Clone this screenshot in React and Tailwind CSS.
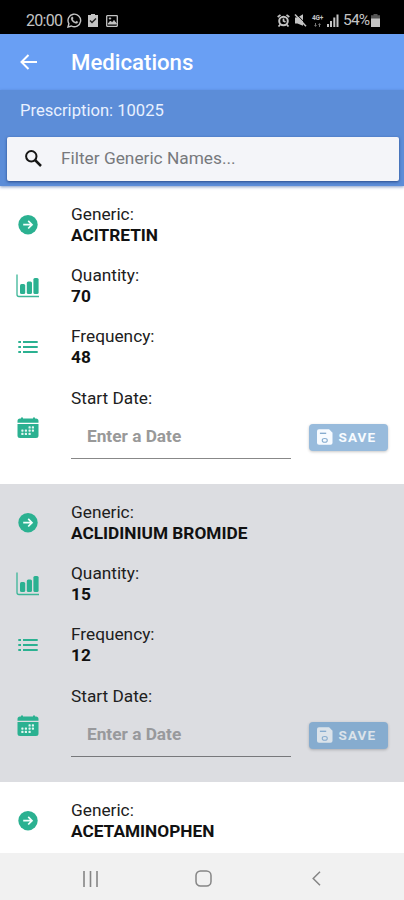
import React from "react";

const medications = [
  { name: "ACITRETIN", quantity: 70, frequency: 48 },
  { name: "ACLIDINIUM BROMIDE", quantity: 15, frequency: 12 },
];

function ArrowCircle() {
  return (
    <svg width="20" height="20" viewBox="0 0 20 20" fill="none">
      <circle cx="10" cy="9.7" r="9.7" fill="#2bb191" />
      <path d="M5.200 9.700h8.800M10.200 5.900 14 9.700l-3.800 3.800" stroke="#f4fffc" strokeWidth="1.700" />
    </svg>
  );
}

function BarChart() {
  return (
    <svg width="24" height="24" viewBox="0 0 24 24" fill="none">
      <path d="M1 .5V20.500a2 2 0 0 0 2 2H23" stroke="#3cb698" strokeWidth="1.300" />
      <rect x="4" y="10" width="5.200" height="10" rx="1.500" fill="#2bb191" />
      <rect x="10.800" y="7.500" width="5.200" height="12.500" rx="1.500" fill="#2bb191" />
      <rect x="17.400" y="4" width="5.200" height="16" rx="1.500" fill="#2bb191" />
    </svg>
  );
}

function ListIcon() {
  return (
    <svg width="20" height="14" viewBox="0 0 20 14" stroke="#2bb191" strokeWidth="1.900">
      <path d="M.3 2h2.700M5 2h14.700M.3 7h2.700M5 7h14.700M.3 12h2.700M5 12h14.700" />
    </svg>
  );
}

function CalendarIcon() {
  const dots = [
    [11.5, 9.3], [14.8, 9.3],
    [4.3, 12.5], [7.8, 12.5], [11.5, 12.5], [14.8, 12.5],
    [4.3, 15.8], [7.8, 15.8], [11.5, 15.8],
  ];
  return (
    <svg width="22" height="22" viewBox="0 0 22 22" fill="#2bb191">
      <path d="M.5 5.700V4a2.500 2.500 0 0 1 2.500-2.500h1V.5h2v1h10v-1h2v1h1A2.500 2.500 0 0 1 21.500 4v1.700z" />
      <path d="M.5 7h21V18.500a2.500 2.500 0 0 1-2.500 2.500H3a2.500 2.500 0 0 1-2.500-2.500z" />
      {dots.map(([x, y]) => (
        <rect key={`${x}-${y}`} x={x} y={y} width="2.200" height="2.200" rx=".6" fill="#e2f6f1" />
      ))}
    </svg>
  );
}

function Row({ icon, label, value }) {
  return (
    <div className="flex h-[61px] items-center">
      <div className="flex w-14 shrink-0 justify-center pb-[2px]">{icon}</div>
      <div className="ml-[15px] pb-[2px] text-[17.25px] leading-[20.5px] text-[#202020]">
        <div>{label}</div>
        <div className="font-bold text-[#111]">{value}</div>
      </div>
    </div>
  );
}

function Medication({ item, shaded }) {
  return (
    <section className={`h-[298px] shrink-0 py-[9px] ${shaded ? "bg-[#dcdde1]" : "bg-white"}`}>
      <Row icon={<ArrowCircle />} label="Generic:" value={item.name} />
      <Row icon={<BarChart />} label="Quantity:" value={item.quantity} />
      <Row icon={<ListIcon />} label="Frequency:" value={item.frequency} />
      <div className="flex h-[97px] items-center">
        <div className="flex w-14 shrink-0 justify-center pt-[2px]"><CalendarIcon /></div>
        <div className="ml-[15px] w-[220px] self-start pt-2.5">
          <div className="text-[17.25px] leading-[20.5px] text-[#202020]">Start Date:</div>
          <div className={`mt-[5.5px] flex h-[45px] items-center border-b pt-[2px] pl-4 text-[17.25px] font-bold ${shaded ? "border-[#77787b] text-[#98999c]" : "border-[#888] text-[#999]"}`}>
            Enter a Date
          </div>
        </div>
        <button className={`mt-[21px] ml-[18px] flex h-[27px] w-[79px] items-center rounded-[4px] pl-2 text-[13.5px] font-bold tracking-[1.1px] shadow-[0_1px_3px_rgba(0,0,0,0.22)] ${shaded ? "bg-[#86accf] text-[#dbe3ea]" : "bg-[#98bbdc] text-[#f7fbff]"}`}>
          <svg width="15.5" height="16" viewBox="0 0 16 16" fill="none">
            <path d="M2 0h10.500L16 3.500V14a2 2 0 0 1-2 2H2a2 2 0 0 1-2-2V2a2 2 0 0 1 2-2z" fill="currentColor" />
            <path d="M3 4.200h6.500" stroke="#86accf" strokeWidth="1.400" />
            <ellipse cx="8" cy="11.500" rx="2.600" ry="1.900" stroke="#86accf" strokeWidth="1.100" />
          </svg>
          <span className="ml-[6px]">SAVE</span>
        </button>
      </div>
    </section>
  );
}

function StatusBar() {
  return (
    <div className="flex h-[34px] shrink-0 items-center bg-black pt-[7px] pr-[24px] pl-[26px] text-[16px] text-[#c4c4c4]">
      <span className="w-[37px] pt-[1px] tracking-[-0.7px]">20:00</span>
      <svg className="ml-1" width="15" height="15" viewBox="0 0 15 15" fill="none" stroke="currentColor">
        <path d="m1 14 .9-3.400A6.300 6.300 0 1 1 4.400 13z" strokeWidth="1.400" />
        <path d="M4.500 4.200c.8-1 1.300-.4 1.800 1l-.6 1c.7 1.400 1.500 2.100 2.800 2.700l1-.8c1.400.5 1.900 1 1 2-2.500 1.800-8-3.200-6-5.900z" fill="currentColor" strokeWidth=".2" />
      </svg>
      <svg className="ml-[6px]" width="10" height="13" viewBox="0 0 10 13">
        <path d="M0 1h3V0h4v1h3v12H0z" fill="currentColor" />
        <path d="m2 6.500 2 2 4-4" stroke="#222" strokeWidth="1.400" fill="none" />
      </svg>
      <svg className="ml-2" width="12" height="12" viewBox="0 0 12 12" fill="none" stroke="currentColor">
        <rect x=".7" y=".7" width="10.600" height="10.600" rx=".5" strokeWidth="1.300" />
        <path d="m2 9 2.500-3 1.500 2 2-2.500L10.500 9z" fill="currentColor" />
        <circle cx="4" cy="3.500" r=".7" fill="currentColor" />
      </svg>
      <svg className="ml-auto" width="13" height="13" viewBox="0 0 13 13" fill="none" stroke="currentColor">
        <circle cx="6.500" cy="7" r="4.300" strokeWidth="2" />
        <path d="M.7 3 3.500.8M12.300 3 9.500.8M6.500 4.500V7l2 1M3.300 10.500 1.500 12.500M9.700 10.500l1.800 2" strokeWidth="1.700" />
      </svg>
      <svg className="ml-1" width="13" height="13" viewBox="0 0 13 13" fill="currentColor">
        <path d="M1 3.500h2.500L9 .3v11.400L3.500 9.500H1z" />
        <path d="m2.200 0 11 11" stroke="#000" strokeWidth="1" />
        <path d="m1 .5 11 11.800" stroke="currentColor" strokeWidth="1.500" />
      </svg>
      <span className="ml-[5px] flex w-[11px] flex-col items-center gap-[1px] text-[6.5px] leading-[8px] font-bold tracking-[-0.3px]">
        <span>4G+</span>
        <svg width="7" height="4" viewBox="0 0 7 4" fill="#777">
          <path d="M0 2h1V0h1v2h1L1.500 4zM4 2l1.500-2L7 2H6v2H5V2z" />
        </svg>
      </span>
      <svg className="ml-[3px]" width="13" height="13" viewBox="0 0 13 13" fill="currentColor">
        <path d="M1 10h2v3H1zM4 7h2v6H4zM7.300 3.500h2V13h-2zM10.500.5h2V13h-2z" />
      </svg>
      <span className="ml-[4px] w-[27px] pt-[1px] text-[15.5px] tracking-[-0.8px]">54%</span>
      <svg className="ml-px" width="9" height="13" viewBox="0 0 9 13">
        <path d="M2.500 0h4v1.200H9V5H0V1.200h2.500z" fill="#555" />
        <path d="M0 4.500h9V13H0z" fill="currentColor" />
      </svg>
    </div>
  );
}

export default function App() {
  return (
    <main className="flex h-[900px] w-[404px] flex-col overflow-hidden bg-white font-['Roboto',sans-serif]">
      <StatusBar />
      <header className="flex h-14 shrink-0 items-center bg-[#699ff4] pl-5 text-white">
        <svg width="17" height="16" viewBox="0 0 17 16" fill="none" stroke="currentColor" strokeWidth="2">
          <path d="M17 8H1.500M8.500 1l-7 7 7 7" />
        </svg>
        <h1 className="ml-[34px] pt-[2px] text-[22.2px] font-medium">Medications</h1>
      </header>
      <div className="z-10 h-24 shrink-0 bg-[#5c8dd8] px-[7px] shadow-[0_1px_3px_rgba(50,90,160,0.6)]">
        <div className="flex h-[47px] items-center pb-[5px] pl-[13px] text-[16.6px] text-[#e9f1ff]">Prescription: 10025</div>
        <div className="mr-[-2px] flex h-11 items-center rounded-[2px] bg-[#f4f5f9] pl-[18px] shadow-[0_1px_3px_rgba(20,50,110,0.75)]">
          <svg className="mb-[2px]" width="17" height="17" viewBox="0 0 17 17" fill="none" stroke="#161616">
            <circle cx="6.300" cy="6.300" r="5.200" strokeWidth="2" />
            <path d="m10 10 6 6" strokeWidth="2.500" />
          </svg>
          <span className="ml-[19px] text-[17.3px] text-[#77797d]">Filter Generic Names...</span>
        </div>
      </div>
      <div className="flex min-h-0 flex-1 flex-col">
        {medications.map((item, i) => (
          <Medication key={item.name} item={item} shaded={i % 2 === 1} />
        ))}
        <section className="bg-white pt-[9px]">
          <Row icon={<ArrowCircle />} label="Generic:" value="ACETAMINOPHEN" />
        </section>
      </div>
      <nav className="flex h-[47px] shrink-0 items-center bg-[#f1f1f1] pt-1 pl-[83px] text-[#858585]">
        <svg width="15" height="16" viewBox="0 0 15 16" stroke="currentColor" strokeWidth="1.600">
          <path d="M1 0v16M7.500 0v16M14 0v16" />
        </svg>
        <svg className="ml-[97px]" width="17" height="17" viewBox="0 0 17 17" fill="none" stroke="currentColor" strokeWidth="1.500">
          <rect x="1" y="1" width="15" height="15" rx="4.500" />
        </svg>
        <svg className="ml-[100px]" width="9" height="15" viewBox="0 0 9 15" fill="none" stroke="currentColor" strokeWidth="1.500">
          <path d="M8 .7 1.200 7.500 8 14.300" />
        </svg>
      </nav>
    </main>
  );
}
